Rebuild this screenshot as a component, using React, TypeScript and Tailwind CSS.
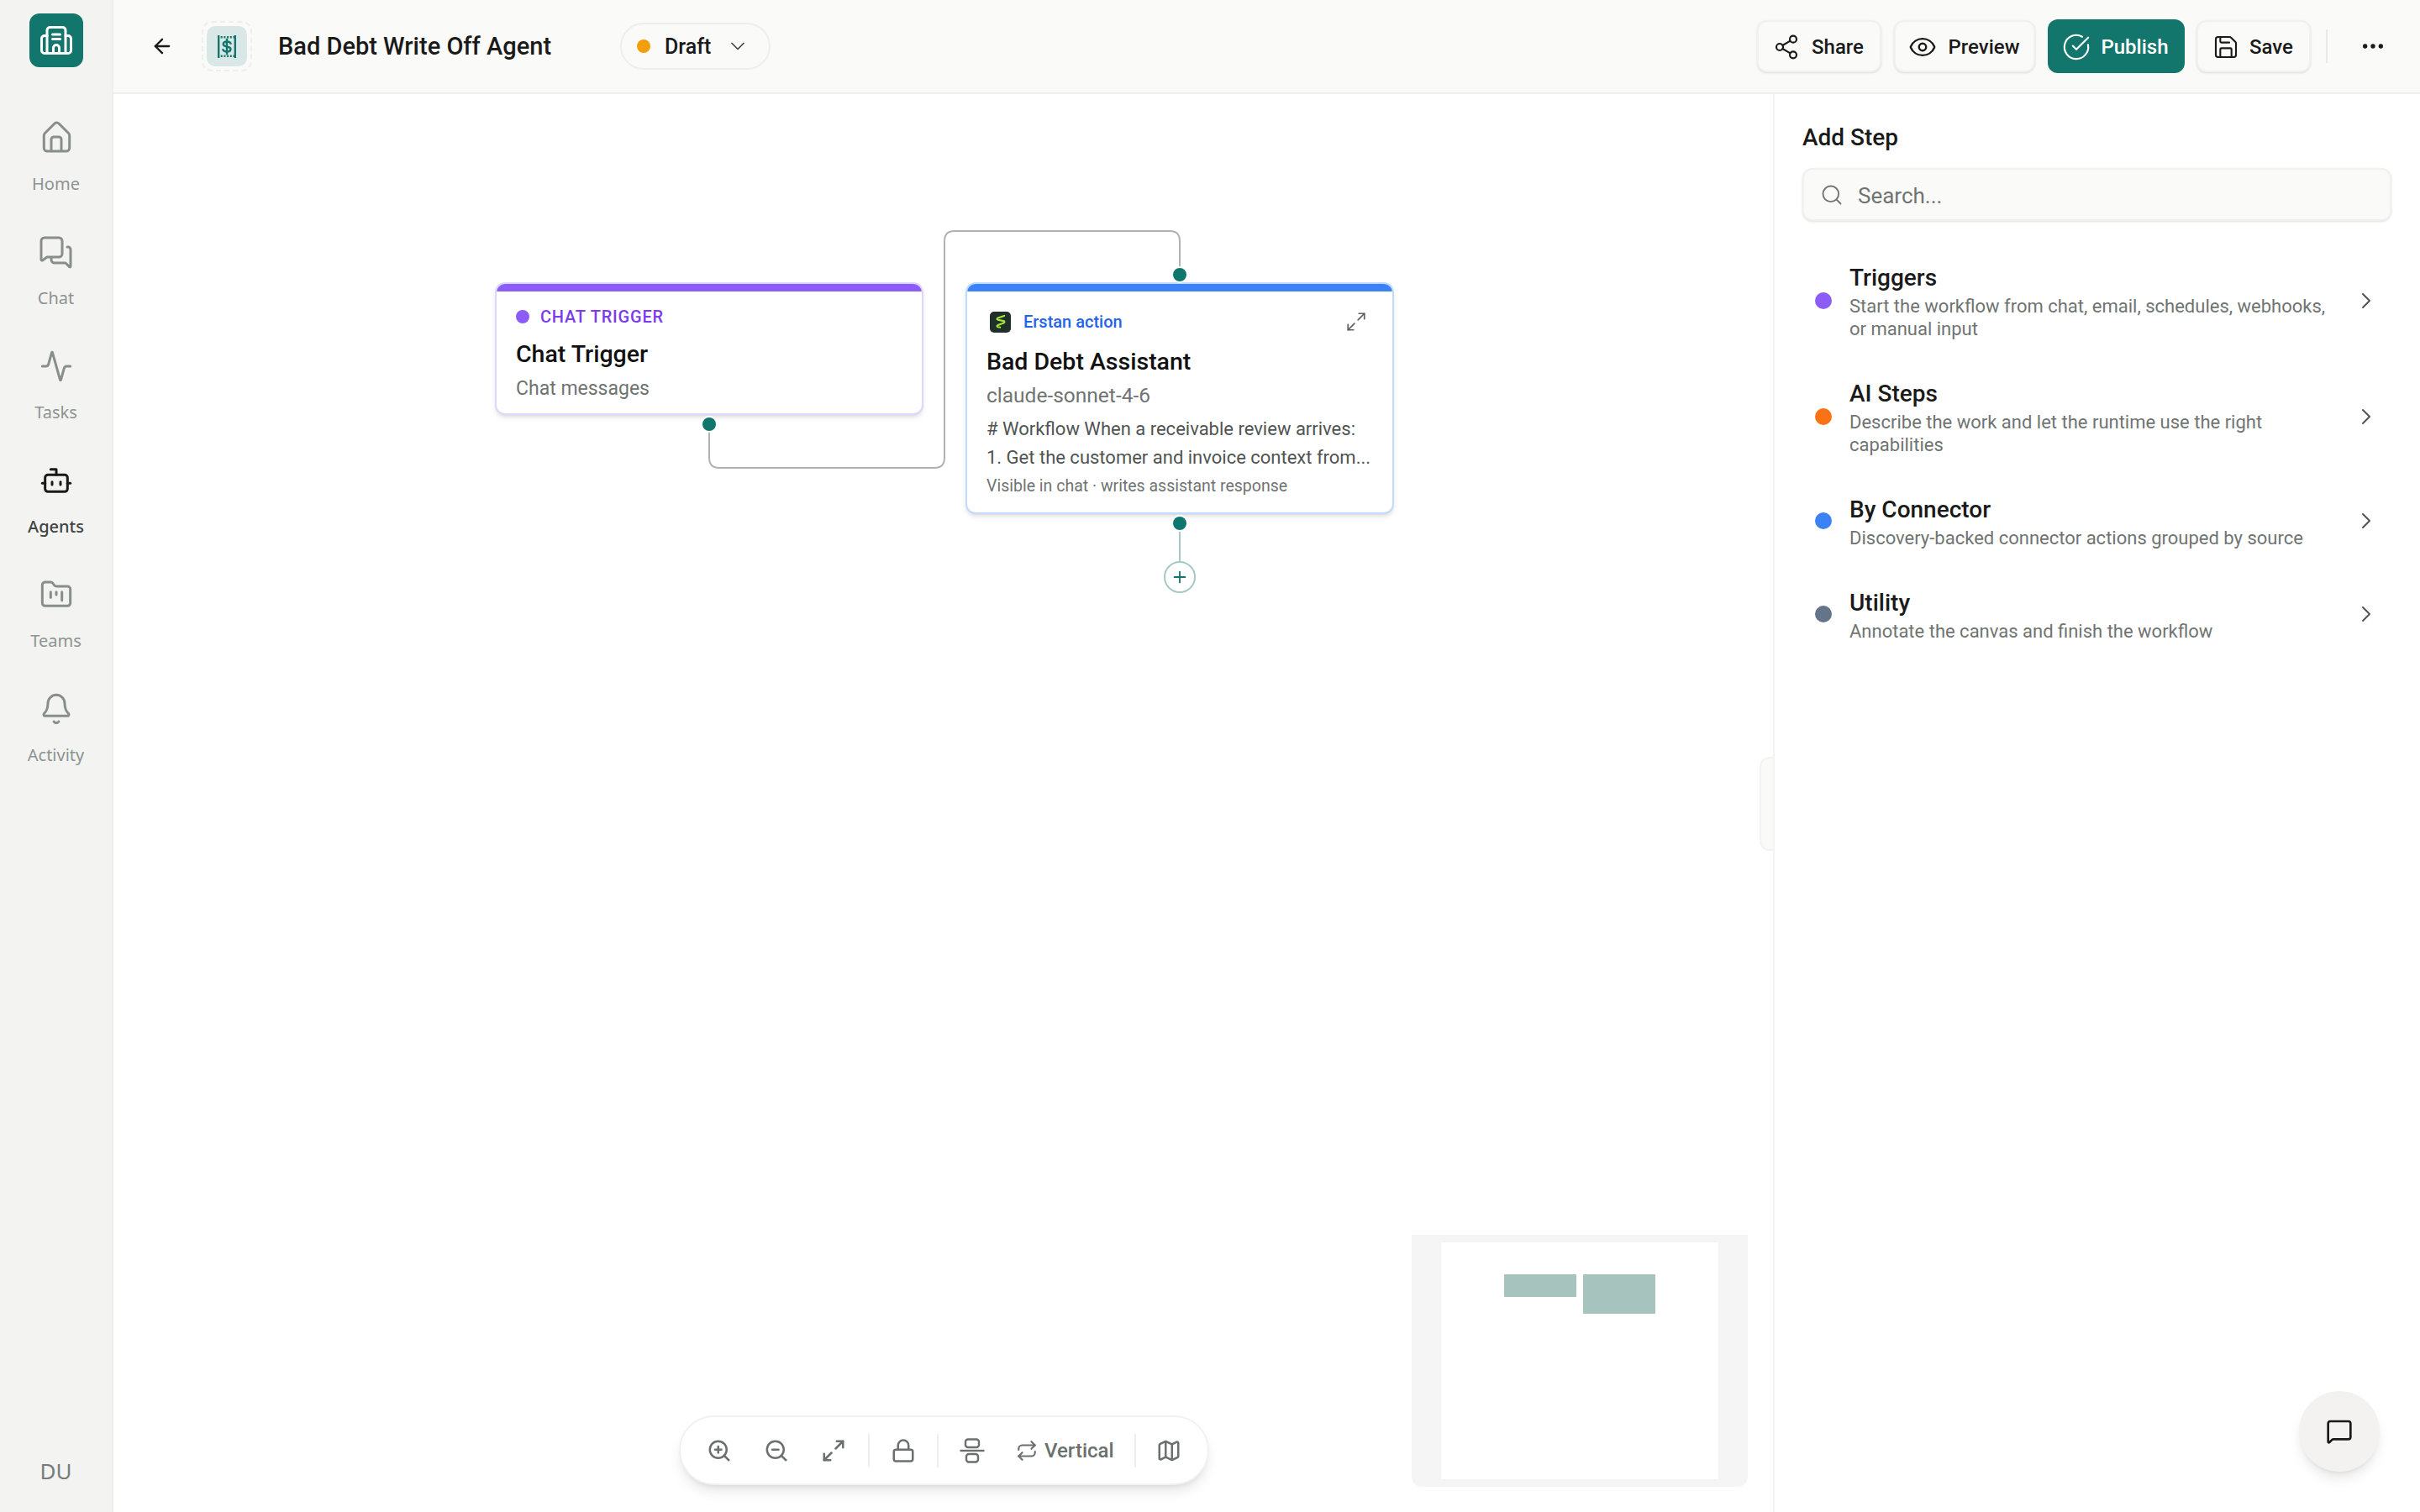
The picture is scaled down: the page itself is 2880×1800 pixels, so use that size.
import {
  Activity,
  ArrowLeft,
  Bell,
  Bot,
  ChevronDown,
  ChevronRight,
  CircleCheckBig,
  Ellipsis,
  Eye,
  FolderKanban,
  Lock,
  Map as MapIcon,
  Maximize2,
  MessageSquare,
  Plus,
  Repeat,
  Save,
  Search,
  Share2,
  ZoomIn,
  ZoomOut,
} from "lucide-react"

function HomeIcon({ className }: { size?: number; strokeWidth?: number; className?: string }) {
  return (
    <svg viewBox="0 0 40 40" className={`w-[40px] h-[40px] ${className}`} fill="none" stroke="currentColor" strokeWidth="3" strokeLinejoin="round">
      <path d="M6.5 14.5 18 3a3.5 3.5 0 0 1 5 0l11.5 11.5a4 4 0 0 1 1.2 2.8V32a4 4 0 0 1-4 4H9.3a4 4 0 0 1-4-4V17.3a4 4 0 0 1 1.2-2.8z" />
      <path d="M14 36V22a3 3 0 0 1 3-3h6a3 3 0 0 1 3 3v14" />
    </svg>
  )
}

function ChatIcon({ className }: { size?: number; strokeWidth?: number; className?: string }) {
  return (
    <svg viewBox="0 0 40 40" className={`w-[40px] h-[40px] ${className}`} fill="none" stroke="currentColor" strokeWidth="3" strokeLinejoin="round" strokeLinecap="round">
      <path d="M6 3h17a4 4 0 0 1 4 4v15a4 4 0 0 1-4 4H9l-5.5 4a1 1 0 0 1-1.5-.8V7a4 4 0 0 1 4-4z" />
      <path d="M33 14h1a3 3 0 0 1 3 3v20a.8.8 0 0 1-1.4.6L31 33H18a4 4 0 0 1-4-4v-1" />
    </svg>
  )
}

const navItems = [
  { label: "Home", icon: HomeIcon },
  { label: "Chat", icon: ChatIcon },
  { label: "Tasks", icon: Activity },
  { label: "Agents", icon: Bot, active: true },
  { label: "Teams", icon: FolderKanban },
  { label: "Activity", icon: Bell },
]

const steps = [
  {
    title: "Triggers",
    text: "Start the workflow from chat, email, schedules, webhooks, or manual input",
    dot: "bg-[#8b5cf6]",
  },
  {
    title: "AI Steps",
    text: "Describe the work and let the runtime use the right capabilities",
    dot: "bg-[#f97316]",
  },
  {
    title: "By Connector",
    text: "Discovery-backed connector actions grouped by source",
    dot: "bg-[#3b82f6]",
  },
  {
    title: "Utility",
    text: "Annotate the canvas and finish the workflow",
    dot: "bg-[#64748b]",
  },
]

function LogoIcon() {
  return (
    <svg viewBox="0 0 38 34" className="w-[38px] h-[34px]" fill="none" stroke="white" strokeWidth="3" strokeLinejoin="round" strokeLinecap="round">
      <path d="M8 32.5V5a3.5 3.5 0 0 1 3.5-3.5h15A3.5 3.5 0 0 1 30 5v27.5" />
      <path d="M8 11.5H5A3.5 3.5 0 0 0 1.5 15v14A3.5 3.5 0 0 0 5 32.5h28a3.5 3.5 0 0 0 3.5-3.5V15a3.5 3.5 0 0 0-3.5-3.5h-3" />
      <path d="M14.5 10h9M14.5 15.5h9" />
      <path d="M15.5 32.5V26a3.5 3.5 0 0 1 7 0v6.5" />
    </svg>
  )
}

function ReceiptIcon() {
  return (
    <svg viewBox="0 0 22 27" className="w-[22px] h-[27px]" fill="none" stroke="#12766c" strokeWidth="2.4">
      <path d="M1.2 0v27M20.8 0v27" />
      <path d="M0 2.2h22M0 24.8h22" strokeDasharray="2 1.7" />
      <path d="M15.4 9.6c-.6-1.3-2.2-2.1-4.4-2.1-2.6 0-4.3 1.1-4.3 3 0 4.3 8.8 1.8 8.8 6 0 1.900-1.900 3-4.500 3-2.200 0-3.900-.8-4.600-2.200M11 5v17" strokeLinecap="square" />
    </svg>
  )
}

function ErstanLogo() {
  return (
    <div className="ml-[4px] w-[25px] h-[25px] rounded-[5px] bg-[#1f2f2b] flex items-center justify-center">
      <svg viewBox="0 0 24 24" className="w-[20px] h-[20px]" fill="none" stroke="#a3e635" strokeWidth="2.6" strokeLinecap="round" strokeLinejoin="round">
        <path d="M17 3.5 8 6.5c-1.800.7-1.800 2.300 0 2.800l8 1.700c1.800.5 1.800 2.100 0 2.800l-8 3c-1.800.7-1.800 2.300 0 2.700l3 .5" />
      </svg>
    </div>
  )
}

function AlignIcon() {
  return (
    <svg viewBox="0 0 30 30" className="w-[30px] h-[30px]" fill="none" stroke="currentColor" strokeWidth="2.4" strokeLinejoin="round">
      <rect x="7" y="1.5" width="16" height="9.5" rx="3" />
      <rect x="8" y="19" width="14" height="9.5" rx="3" />
      <path d="M0.5 15h29" />
    </svg>
  )
}

function Port({ className }: { className: string }) {
  return <div className={`absolute w-[20px] h-[20px] rounded-full bg-[#0f766e] border-2 border-white ${className}`} />
}

function ToolDivider() {
  return <div className="w-[2px] h-[40px] bg-[#eeeeec]" />
}

export default function App() {
  return (
    <div className="flex w-[2880px] h-[1800px] overflow-hidden bg-white text-[#1a1a1a] font-['Roboto',sans-serif]">
      {/* Left rail */}
      <aside className="w-[135px] shrink-0 flex flex-col items-center bg-[#f3f3f1] border-r-2 border-[#eeeeec] font-['Noto_Sans',sans-serif]">
        <div className="w-[64px] h-[64px] mt-[16px] rounded-[12px] bg-[#12766c] flex items-center justify-center">
          <LogoIcon />
        </div>
        <nav className="mt-[48px] w-full">
          {navItems.map((item) => {
            const Icon = item.icon
            return (
              <div key={item.label} className="h-[136px] pt-[16px] flex flex-col items-center">
                <Icon
                  size={40}
                  strokeWidth={1.8}
                  className={item.active ? "text-[#1a1a1a]" : "text-[#878e8b]"}
                />
                <span
                  className={`mt-[20px] h-[28px] leading-[30px] overflow-hidden text-[20px] ${
                    item.active ? "text-[#3f4545] font-medium" : "text-[#8d9391]"
                  }`}
                >
                  {item.label}
                </span>
              </div>
            )
          })}
        </nav>
        <div className="mt-auto mb-[29px] text-[26px] text-[#777c7a]">DU</div>
      </aside>

      <div className="flex-1 flex flex-col min-w-0">
        {/* Top bar */}
        <header className="h-[112px] shrink-0 flex items-center bg-[#fafaf8] border-b-2 border-[#f0f0ee] pl-[44px] pr-[40px]">
          <ArrowLeft size={28} strokeWidth={2} className="text-[#1a1a1a]" />
          <div className="ml-[33px] w-[60px] h-[60px] rounded-[12px] border-2 border-dashed border-[#eeeeec] flex items-center justify-center">
            <div className="w-[48px] h-[48px] rounded-[10px] bg-[#d9e8e6] flex items-center justify-center">
              <ReceiptIcon />
            </div>
          </div>
          <h1 className="ml-[31px] w-[329px] pt-[2px] whitespace-nowrap text-[29px] font-medium text-[#1a1a1a]">Bad Debt Write Off Agent</h1>
          <div className="ml-[78px] h-[56px] w-[179px] rounded-full border-2 border-[#eeeeec] flex items-center pl-[18px]">
            <span className="w-[16px] h-[16px] rounded-full bg-[#f59e0b]" />
            <span className="ml-[17px] pt-[2px] text-[25px] font-medium">Draft</span>
            <ChevronDown size={28} strokeWidth={1.5} className="ml-[18px] text-[#444]" />
          </div>

          <div className="ml-auto flex items-center">
            <button className="h-[62px] w-[148px] pr-[2px] pt-[2px] rounded-[12px] bg-[#fafaf8] border-2 border-[#f1f1ef] shadow-sm flex items-center justify-center gap-[14px] text-[24px] font-medium">
              <Share2 size={32} strokeWidth={1.6} />
              Share
            </button>
            <button className="ml-[15px] h-[62px] w-[168px] pr-[2px] pt-[2px] rounded-[12px] bg-[#fafaf8] border-2 border-[#f1f1ef] shadow-sm flex items-center justify-center gap-[14px] text-[24px] font-medium">
              <Eye size={34} strokeWidth={1.7} />
              Preview
            </button>
            <button className="ml-[15px] h-[64px] w-[163px] pr-[2px] pt-[2px] rounded-[12px] bg-[#12766c] text-white flex items-center justify-center gap-[12px] text-[24px] font-medium">
              <CircleCheckBig size={34} strokeWidth={1.5} />
              Publish
            </button>
            <button className="ml-[14px] h-[62px] w-[136px] pr-[2px] pt-[2px] rounded-[12px] bg-[#fafaf8] border-2 border-[#f1f1ef] shadow-sm flex items-center justify-center gap-[12px] text-[24px] font-medium">
              <Save size={32} strokeWidth={1.6} />
              Save
            </button>
            <div className="ml-[18px] w-[2px] h-[40px] bg-[#e9e9e7]" />
            <Ellipsis size={32} strokeWidth={2} className="ml-[38px] text-[#1a1a1a]" />
          </div>
        </header>

        <div className="flex-1 flex min-h-0">
          {/* Canvas */}
          <main className="relative w-[1975px] shrink-0 bg-white">
            <svg className="absolute left-0 top-0 w-[1975px] h-[700px]" fill="none">
              <path
                d="M709 393 V433 Q709 445 721 445 H977 Q989 445 989 433 V175 Q989 163 1001 163 H1257 Q1269 163 1269 175 V215"
                stroke="#b1b1b7"
                strokeWidth="2"
              />
              <path d="M1269 511 V556" stroke="#a7c8c4" strokeWidth="2" />
            </svg>

            {/* Trigger node */}
            <div className="absolute left-[454px] top-[224px] w-[510px] h-[158px] rounded-[12px] bg-white border-2 border-[#ddd6fe] shadow-md overflow-hidden">
              <div className="h-[9px] bg-[#8b5cf6]" />
              <div className="px-[23px] pt-[15px]">
                <div className="flex items-center gap-[13px] text-[#7c3aed] text-[20px] font-medium tracking-[0.04em] leading-[30px]">
                  <span className="w-[16px] h-[16px] rounded-full bg-[#8b5cf6]" />
                  CHAT TRIGGER
                </div>
                <div className="mt-[10px] text-[28.5px] font-medium leading-[40px] text-[#111]">Chat Trigger</div>
                <div className="mt-[5px] text-[23px] leading-[32px] text-[#6f7472]">Chat messages</div>
              </div>
            </div>
            <Port className="left-[699px] top-[383px]" />

            {/* Agent node */}
            <div className="absolute left-[1014px] top-[224px] w-[510px] h-[276px] rounded-[12px] bg-white border-2 border-[#bfdbfe] shadow-md overflow-hidden">
              <div className="h-[9px] bg-[#3b82f6]" />
              <div className="px-[23px] pt-[21px]">
                <div className="flex items-center">
                  <ErstanLogo />
                  <span className="ml-[15px] text-[20px] font-medium text-[#2563eb] leading-[30px]">Erstan action</span>
                  <Maximize2 size={26} strokeWidth={1.6} className="ml-auto mr-[7px] text-[#5f6462]" />
                </div>
                <div className="mt-[13px] text-[28.5px] font-medium leading-[40px] text-[#111]">Bad Debt Assistant</div>
                <div className="mt-[2px] text-[24.5px] leading-[36px] text-[#6f7472]">claude-sonnet-4-6</div>
                <div className="mt-[5px] text-[22px] leading-[34px] text-[#4f5452] h-[68px]">
                  <div className="whitespace-nowrap"># Workflow When a receivable review arrives:</div>
                  <div className="whitespace-nowrap">1. Get the customer and invoice context from...</div>
                </div>
                <div className="mt-[2px] text-[19.5px] leading-[30px] text-[#6f7472]">Visible in chat · writes assistant response</div>
              </div>
            </div>
            <Port className="left-[1259px] top-[205px]" />
            <Port className="left-[1259px] top-[501px]" />
            <div className="absolute left-[1250px] top-[556px] w-[38px] h-[38px] rounded-full bg-white border-2 border-[#a7c8c4] flex items-center justify-center">
              <Plus size={22} strokeWidth={2} className="text-[#0f766e]" />
            </div>

            {/* Collapse handle */}
            <div className="absolute right-0 top-[789px] w-[16px] h-[112px] rounded-l-[12px] bg-[#fafaf8] border-2 border-r-0 border-[#f3f3f1]" />

            {/* Minimap */}
            <div className="absolute left-[1545px] top-[1358px] w-[400px] h-[300px] bg-[#f5f5f5] rounded-b-[12px] flex justify-center pt-[9px]">
              <div className="w-[330px] h-[282px] bg-white flex items-start justify-center gap-[8px] pt-[38px]">
                <div className="w-[86px] h-[27px] bg-[#a7c3be] rounded-[1px]" />
                <div className="w-[86px] h-[47px] bg-[#a7c3be] rounded-[1px]" />
              </div>
            </div>

            {/* Canvas toolbar */}
            <div className="absolute left-[673px] top-[1573px] w-[631px] h-[83px] rounded-full bg-white border-2 border-[#f1f1ee] shadow-lg flex items-center pl-[31px] text-[#6b706e]">
              <ZoomIn size={30} strokeWidth={2} />
              <ZoomOut size={30} strokeWidth={2} className="ml-[38px]" />
              <Maximize2 size={30} strokeWidth={2} className="ml-[38px]" />
              <div className="ml-[26px]">
                <ToolDivider />
              </div>
              <Lock size={30} strokeWidth={2} className="ml-[25px]" />
              <div className="ml-[25px]">
                <ToolDivider />
              </div>
              <div className="ml-[25px]">
                <AlignIcon />
              </div>
              <Repeat size={26} strokeWidth={2} className="ml-[37px]" />
              <span className="ml-[8px] text-[24px] font-medium">Vertical</span>
              <div className="ml-[24px]">
                <ToolDivider />
              </div>
              <MapIcon size={30} strokeWidth={2} className="ml-[24px]" />
            </div>
          </main>

          {/* Add step panel */}
          <section className="flex-1 border-l-2 border-[#f3f3f1] pl-[33px] pr-[34px] pt-[33px]">
            <h2 className="text-[28px] font-medium leading-[38px]">Add Step</h2>
            <div className="mt-[17px] h-[63px] rounded-[12px] bg-[#fafaf8] border-2 border-[#f1f1ef] shadow-sm flex items-center pl-[19px]">
              <Search size={28} strokeWidth={1.6} className="text-[#6f7472]" />
              <span className="ml-[17px] pt-[3px] text-[26px] text-[#6f7472]">Search...</span>
            </div>
            <div className="mt-[27px] flex flex-col">
              {steps.map((step) => (
                <div key={step.title} className="flex items-center py-[23px] pl-[15px] pr-[14px]">
                  <span className={`mb-[3px] w-[20px] h-[20px] rounded-full shrink-0 ${step.dot}`} />
                  <div className="ml-[21px] w-[590px]">
                    <div className="text-[28px] font-medium leading-[36px] text-[#1a1a1a]">{step.title}</div>
                    <div className="mt-[2px] text-[22px] leading-[27px] text-[#6f7472]">{step.text}</div>
                  </div>
                  <ChevronRight size={32} strokeWidth={1.5} className="mb-[3px] ml-auto text-[#4f5452]" />
                </div>
              ))}
            </div>
          </section>
        </div>
      </div>

      {/* Floating chat button */}
      <button className="absolute left-[2736px] top-[1656px] w-[96px] h-[96px] rounded-full bg-[#f3f2f0] shadow-lg flex items-center justify-center">
        <MessageSquare size={32} strokeWidth={2} className="text-[#1a1a1a]" />
      </button>
    </div>
  )
}
